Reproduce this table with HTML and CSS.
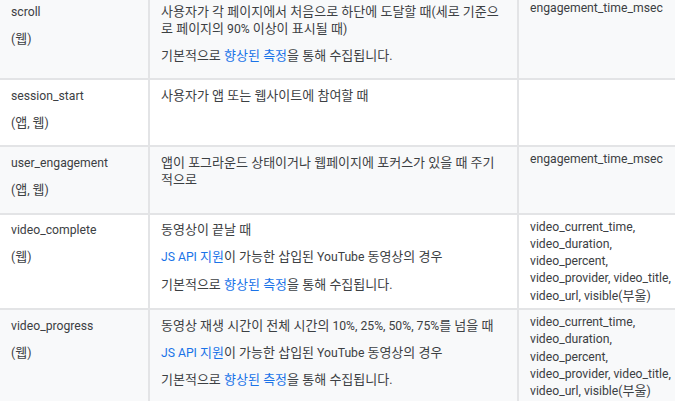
FILE: index.html
```html
<!DOCTYPE html>
<html lang="ko">
<head>
<meta charset="UTF-8">
<meta name="viewport" content="width=device-width, initial-scale=1.0">
<title>이벤트 목록</title>
<link rel="stylesheet" href="styles.css">
</head>
<body>

<table class="events">
    <colgroup>
        <col class="col-name">
        <col class="col-desc">
        <col class="col-params">
    </colgroup>
    <tbody>
        <tr class="shaded">
            <td>
                <p>scroll</p>
                <p>(<span class="ko">웹</span>)</p>
            </td>
            <td>
                <p><span class="ko">사용자가 각 페이지에서 처음으로 하단에 도달할 때</span>(<span class="ko">세로 기준으로 페이지의</span> 90% <span class="ko">이상이 표시될 때</span>)</p>
                <p><span class="ko">기본적으로 </span><a href="#" class="ko">향상된 측정</a><span class="ko">을 통해 수집됩니다</span>.</p>
            </td>
            <td>engagement_time_msec</td>
        </tr>
        <tr>
            <td>
                <p>session_start</p>
                <p>(<span class="ko">앱</span>, <span class="ko">웹</span>)</p>
            </td>
            <td>
                <p><span class="ko">사용자가 앱 또는 웹사이트에 참여할 때</span></p>
            </td>
            <td></td>
        </tr>
        <tr class="shaded">
            <td>
                <p>user_engagement</p>
                <p>(<span class="ko">앱</span>, <span class="ko">웹</span>)</p>
            </td>
            <td>
                <p><span class="ko">앱이 포그라운드 상태이거나 웹페이지에 포커스가 있을 때 주기적으로</span></p>
            </td>
            <td>engagement_time_msec</td>
        </tr>
        <tr>
            <td>
                <p>video_complete</p>
                <p>(<span class="ko">웹</span>)</p>
            </td>
            <td>
                <p><span class="ko">동영상이 끝날 때</span></p>
                <p><a href="#">JS API <span class="ko">지원</span></a><span class="ko">이 가능한 삽입된</span> YouTube <span class="ko">동영상의 경우</span></p>
                <p><span class="ko">기본적으로 </span><a href="#" class="ko">향상된 측정</a><span class="ko">을 통해 수집됩니다</span>.</p>
            </td>
            <td>video_current_time, video_duration, video_percent, video_provider, video_title, video_url, visible(<span class="ko">부울</span>)</td>
        </tr>
        <tr class="shaded">
            <td>
                <p>video_progress</p>
                <p>(<span class="ko">웹</span>)</p>
            </td>
            <td>
                <p><span class="ko">동영상 재생 시간이 전체 시간의</span> 10%, 25%, 50%, 75%<span class="ko">를 넘을 때</span></p>
                <p><a href="#">JS API <span class="ko">지원</span></a><span class="ko">이 가능한 삽입된</span> YouTube <span class="ko">동영상의 경우</span></p>
                <p><span class="ko">기본적으로 </span><a href="#" class="ko">향상된 측정</a><span class="ko">을 통해 수집됩니다</span>.</p>
            </td>
            <td>video_current_time, video_duration, video_percent, video_provider, video_title, video_url, visible(<span class="ko">부울</span>)</td>
        </tr>
    </tbody>
</table>

</body>
</html>
```

FILE: styles.css
```css
body {
    margin: 0;
    background: #fff;
    font-family: Roboto, "Noto Sans CJK KR", sans-serif;
    font-size: 12.2px;
    line-height: 17.3px;
    color: #3c4043;
    overflow: hidden;
}
.events {
    border-collapse: collapse;
    table-layout: fixed;
    width: 696px;
    margin: -6px 0 0 -2px;
}
.col-name {
    width: 150px;
}
.col-desc {
    width: 369px;
}
.col-params {
    width: 177px;
}
.events td {
    border: 2px solid #e3e4e6;
    padding: 4px 11px 3px;
    vertical-align: top;
}
.events tr.shaded {
    background-color: #f8f9fa;
}
.events td p {
    margin: 3.5px 0 10px;
}
.events a {
    color: #1a73e8;
    text-decoration: none;
}
/* hangul runs are set a little larger, like the original font */
.ko {
    font-size: 13px;
    line-height: 10px;
}
```
